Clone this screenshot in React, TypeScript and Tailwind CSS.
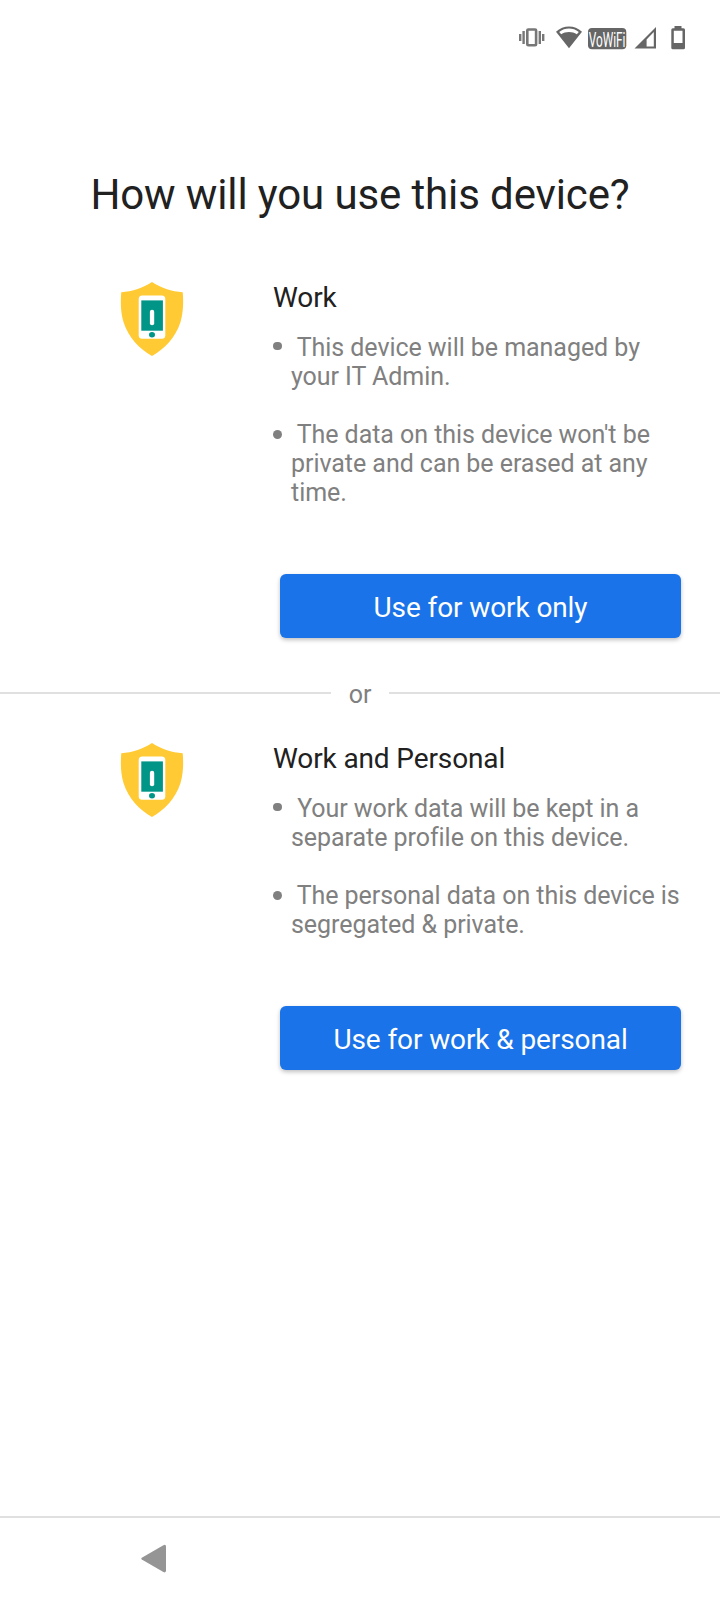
import React from "react";

function ShieldIcon() {
  return (
    <svg className="block h-[76px] w-[64px]" viewBox="0 0 64 76">
      <path
        d="M32 1C24 6.5 12 10.5 1.3 11.3C.5 20 .5 31 3.5 41C8.5 57 20 68 32 75C44 68 55.5 57 60.5 41C63.5 31 63.5 20 62.7 11.3C52 10.5 40 6.5 32 1Z"
        fill="#ffca33"
      />
      <rect x="18.7" y="14.6" width="26.6" height="43.2" rx="3.5" fill="#fff" />
      <rect x="21.3" y="19.4" width="21.6" height="30.3" fill="#009587" />
      <rect x="29.9" y="28.7" width="4.3" height="15.6" rx="2.1" fill="#fff" />
      <ellipse cx="32" cy="53.7" rx="3" ry="2.7" fill="#009587" />
    </svg>
  );
}

function StatusBar() {
  return (
    <header className="flex h-[76px] justify-end">
      <svg className="block h-[76px] w-[210px]" viewBox="510 0 210 76" fill="#666">
        <g fill="none" stroke="#777">
          <rect x="527.3" y="29.5" width="8.8" height="15.8" rx="1" strokeWidth="2.6" />
          <path d="M523.6 31V44M539.8 31V44M520.2 34V41M543.2 34V41" strokeWidth="2.4" />
        </g>
        <path
          fillRule="evenodd"
          d="M556 31.8C563.5 24.7 574.5 24.7 582 31.8L569 48.2ZM559.2 32L561.2 34.3C565.5 31.2 572.5 31.2 576.8 34.3L578.8 32C573 27.4 565 27.4 559.2 32Z"
        />
        <rect x="588" y="28.1" width="38.3" height="21.2" rx="4" />
        <text
          x="588.7"
          y="46.6"
          fill="#fff"
          fontFamily="Roboto, sans-serif"
          fontSize="20"
          textLength="36.8"
          lengthAdjust="spacingAndGlyphs"
        >
          VoWiFi
        </text>
        <path fillRule="evenodd" d="M656 27V48.5H634.5ZM653.8 32L646.6 39.4V46.5H653.8Z" />
        <path
          fillRule="evenodd"
          d="M674.5 26H681.5V28.3H683.5Q685 28.3 685 29.8V47.7Q685 49.2 683.5 49.2H672.8Q671.3 49.2 671.3 47.7V29.8Q671.3 28.3 672.8 28.3H674.5ZM673.8 30.7V43H682.5V30.7Z"
        />
      </svg>
    </header>
  );
}

function Bullet({ lines, center }: { lines: string[]; center: string }) {
  return (
    <li className="flex">
      <span className={`${center} size-[8.5px] shrink-0 rounded-full bg-[#808080]`} />
      <p className="ml-[9.5px] whitespace-pre">{lines.join("\n")}</p>
    </li>
  );
}

function Option({ title, bullets, action }: { title: string; bullets: string[][]; action: string }) {
  return (
    <section className="flex pr-[39px]">
      <div className="w-[273px] shrink-0 pl-[120px]">
        <ShieldIcon />
      </div>
      <div className="min-w-0 flex-1 pt-px">
        <h2 className="text-[28px] leading-8 tracking-[-0.12px] text-[#212121]">{title}</h2>
        <ul className="mt-[19px] flex flex-col gap-[29px] text-[25px] leading-[29px] tracking-[-0.05px] text-[#808080]">
          {bullets.map((lines, i) => (
            <Bullet key={lines[0]} lines={lines} center={i === 0 ? "mt-[8.5px]" : "mt-[10px]"} />
          ))}
        </ul>
        <button className="mt-[67px] ml-[7px] flex h-16 w-[401px] items-center justify-center rounded-md bg-[#1a73e8] pt-1 text-[28px] leading-8 tracking-[-0.1px] text-white shadow-[0_2px_4px_rgba(0,0,0,0.25)]">
          {action}
        </button>
      </div>
    </section>
  );
}

export default function App() {
  return (
    <div className="flex h-[1600px] w-[720px] flex-col overflow-hidden bg-white font-['Roboto',sans-serif]">
      <StatusBar />
      <main className="flex flex-1 flex-col pt-[94px]">
        <h1 className="text-center text-[42px] leading-[50px] tracking-[-0.12px] text-[#212121]">How will you use this device?</h1>
        <div className="mt-[61px]">
          <Option
            title="Work"
            action="Use for work only"
            bullets={[
              [" This device will be managed by", "your IT Admin."],
              [" The data on this device won't be", "private and can be erased at any", "time."],
            ]}
          />
        </div>
        <div className="mt-[42px] flex h-[29px] items-start">
          <div className="mt-3 h-[2px] w-[331px] bg-[#e0e0e0]" />
          <span className="w-[58px] text-center text-[25px] leading-[30px] text-[#808080]">or</span>
          <div className="mt-3 h-[2px] flex-1 bg-[#e0e0e0]" />
        </div>
        <div className="mt-[33px]">
          <Option
            title="Work and Personal"
            action="Use for work & personal"
            bullets={[
              [" Your work data will be kept in a", "separate profile on this device."],
              [" The personal data on this device is", "segregated & private."],
            ]}
          />
        </div>
      </main>
      <footer className="h-[84px] border-t-2 border-[#e0e0e0] pt-[26px] pl-[141px]">
        <svg className="block h-[29px] w-[25px]" viewBox="0 -.6 25 29" fill="#959595">
          <path d="M.8 13.1L22.4.6Q25 -.6 25 2V26Q25 28.6 22.4 27.4L.8 14.9Q-.3 14 .8 13.1Z" />
        </svg>
      </footer>
    </div>
  );
}
